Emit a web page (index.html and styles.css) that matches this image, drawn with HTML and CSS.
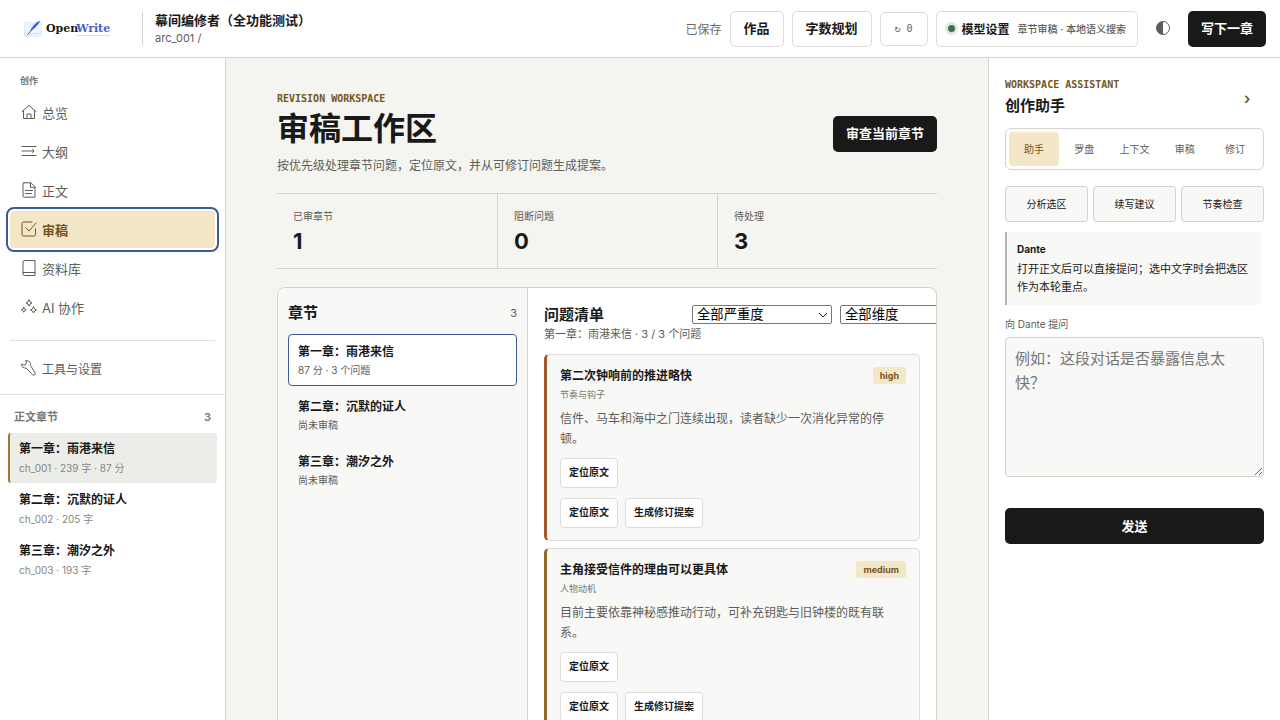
FILE: index.html
```html
<!DOCTYPE html>
<html lang="zh-CN">
<head>
    <meta charset="UTF-8">
    <meta name="viewport" content="width=device-width, initial-scale=1.0">
    <title>OpenWrite - 审稿</title>
    <link rel="stylesheet" href="styles.css">
</head>
<body>
    <header class="topbar">
        <a class="logo" href="#" aria-label="OpenWrite">
            <svg class="logo-mark" viewBox="0 0 20 20" aria-hidden="true">
                <path d="M2 4 Q6 2.500 10 3.500 T18.500 3 V16.500 Q14 18 10 17 T1.500 17.500 Z" fill="#edf5fd" stroke="#cfe1f5" stroke-width=".7"/>
                <path d="M5 16.500 Q10 13.500 16 14.500" fill="none" stroke="#c3d7f2" stroke-width=".8"/>
                <path d="M17.200 1.500 C12.500 3.500 9 7 7 11.800 C11 10.500 15.500 6.500 17.200 1.500 Z" fill="#5b7be6"/>
                <path d="M16 3 L4.600 15.500" stroke="#2a3e9c" stroke-width=".9" fill="none"/>
            </svg>
            <span class="logo-text">Open<span class="logo-accent">Write</span></span>
        </a>
        <div class="project">
            <strong class="project-name">幕间编修者（全功能测试）</strong>
            <span class="project-path">arc_001 /</span>
        </div>
        <div class="actions">
            <span class="save-state">已保存</span>
            <button class="btn" type="button">作品</button>
            <button class="btn" type="button">字数规划</button>
            <button class="btn btn-count" type="button">↻ 0</button>
            <button class="btn btn-model" type="button">
                <span class="dot"></span>模型设置<small>章节审稿 · 本地语义搜索</small>
            </button>
            <button class="theme" type="button" aria-label="切换主题">
                <svg viewBox="0 0 16 16" aria-hidden="true">
                    <circle cx="8" cy="8" r="6.500" fill="none" stroke="currentColor"/>
                    <path d="M8 1.500 A6.500 6.500 0 0 0 8 14.500 Z" fill="currentColor"/>
                </svg>
            </button>
            <button class="btn btn-dark" type="button">写下一章</button>
        </div>
    </header>

    <div class="shell">
        <aside class="sidebar">
            <nav class="nav">
                <p class="nav-label">创作</p>
                <a class="nav-item" href="#">
                    <svg viewBox="0 0 16 16"><path d="M1 7.500 8 1.500l7 6M2.500 6.500v8h11v-8M6 14.500v-4.500h4v4.500"/></svg>总览
                </a>
                <a class="nav-item" href="#">
                    <svg viewBox="0 0 16 16"><path d="M1 3.500h14M1 8h11M1 12.500h14M11.500 6.500 13 8l-1.500 1.500"/></svg>大纲
                </a>
                <a class="nav-item" href="#">
                    <svg viewBox="0 0 16 16"><path d="M3 .8h7l4 4v10.400H3a1 1 0 0 1-1-1V1.800a1 1 0 0 1 1-1zM9.500.8v4.500H14M4.500 8.500h7M4.500 11.500h6"/></svg>正文
                </a>
                <a class="nav-item active" href="#" aria-current="page">
                    <svg viewBox="0 0 16 16"><path d="M14.500 7.500v6a1.500 1.500 0 0 1-1.500 1.500H2.500A1.500 1.500 0 0 1 1 13.500v-11A1.500 1.500 0 0 1 2.500 1H11M5 7l3 3 7-8"/></svg>审稿
                </a>
                <a class="nav-item" href="#">
                    <svg viewBox="0 0 16 16"><path d="M3.500.5H14v15H3.500A1.500 1.500 0 0 1 2 14V2A1.500 1.500 0 0 1 3.500.5zM2 12.500h12"/></svg>资料库
                </a>
                <a class="nav-item" href="#">
                    <svg viewBox="0 0 16 16"><path d="M8 1q.5 2.500 3 3-2.500.5-3 3-.5-2.500-3-3 2.500-.5 3-3zM2.800 8.500q.4 2 2.400 2.400-2 .4-2.400 2.400-.4-2-2.400-2.400 2-.4 2.400-2.400zM12.500 8q.5 2.500 3 3-2.500.5-3 3-.5-2.500-3-3 2.500-.5 3-3z"/></svg>AI 协作
                </a>
                <hr class="nav-line">
                <a class="nav-item nav-small" href="#">
                    <svg viewBox="0 0 16 16"><path d="M5 .8C5.800 2 5.500 4.500 4 5 2.500 5.300 1.500 4 .5 4.200.5 6.500 2.500 8.600 5 8l6.500 6.700c1.500 1.200 3.300-.2 2.700-1.700L9.500 5.500C10 2.500 8 .3 5 .8z"/></svg>工具与设置
                </a>
            </nav>
            <section class="book">
                <div class="book-head"><span>正文章节</span><span>3</span></div>
                <a class="book-item current" href="#"><strong>第一章：雨港来信</strong><span>ch_001 · 239 字 · 87 分</span></a>
                <a class="book-item" href="#"><strong>第二章：沉默的证人</strong><span>ch_002 · 205 字</span></a>
                <a class="book-item" href="#"><strong>第三章：潮汐之外</strong><span>ch_003 · 193 字</span></a>
            </section>
        </aside>

        <main class="main">
            <div class="page-head">
                <div>
                    <p class="kicker">REVISION WORKSPACE</p>
                    <h1>审稿工作区</h1>
                    <p class="lead">按优先级处理章节问题，定位原文，并从可修订问题生成提案。</p>
                </div>
                <button class="btn btn-dark" type="button">审查当前章节</button>
            </div>

            <div class="stats">
                <div class="stat"><span>已审章节</span><strong>1</strong></div>
                <div class="stat"><span>阻断问题</span><strong>0</strong></div>
                <div class="stat"><span>待处理</span><strong>3</strong></div>
            </div>

            <div class="review">
                <section class="chapters">
                    <div class="chapters-head"><h2>章节</h2><span>3</span></div>
                    <button class="chapter selected" type="button"><strong>第一章：雨港来信</strong><span>87 分 · 3 个问题</span></button>
                    <button class="chapter" type="button"><strong>第二章：沉默的证人</strong><span>尚未审稿</span></button>
                    <button class="chapter" type="button"><strong>第三章：潮汐之外</strong><span>尚未审稿</span></button>
                </section>
                <section class="issues">
                    <div class="issues-head">
                        <div class="issues-title">
                            <h2>问题清单</h2>
                            <p>第一章：雨港来信 · 3 / 3 个问题</p>
                        </div>
                        <div class="filters">
                            <select aria-label="严重度"><option>全部严重度</option></select>
                            <select aria-label="维度"><option>全部维度</option></select>
                        </div>
                    </div>
                    <article class="issue high">
                        <div class="issue-head"><h3>第二次钟响前的推进略快</h3><span class="tag">high</span></div>
                        <p class="issue-type">节奏与钩子</p>
                        <p class="issue-text">信件、马车和海中之门连续出现，读者缺少一次消化异常的停顿。</p>
                        <div class="issue-row"><button class="btn-mini" type="button">定位原文</button></div>
                        <div class="issue-row">
                            <button class="btn-mini" type="button">定位原文</button>
                            <button class="btn-mini" type="button">生成修订提案</button>
                        </div>
                    </article>
                    <article class="issue medium">
                        <div class="issue-head"><h3>主角接受信件的理由可以更具体</h3><span class="tag">medium</span></div>
                        <p class="issue-type">人物动机</p>
                        <p class="issue-text">目前主要依靠神秘感推动行动，可补充钥匙与旧钟楼的既有联系。</p>
                        <div class="issue-row"><button class="btn-mini" type="button">定位原文</button></div>
                        <div class="issue-row">
                            <button class="btn-mini" type="button">定位原文</button>
                            <button class="btn-mini" type="button">生成修订提案</button>
                        </div>
                    </article>
                </section>
            </div>
        </main>

        <aside class="assistant">
            <div class="assistant-head">
                <div>
                    <p class="kicker">WORKSPACE ASSISTANT</p>
                    <h2>创作助手</h2>
                </div>
                <button class="collapse" type="button" aria-label="收起">›</button>
            </div>
            <div class="tabs">
                <button class="tab on" type="button">助手</button>
                <button class="tab" type="button">罗盘</button>
                <button class="tab" type="button">上下文</button>
                <button class="tab" type="button">审稿</button>
                <button class="tab" type="button">修订</button>
            </div>
            <div class="quick">
                <button type="button">分析选区</button>
                <button type="button">续写建议</button>
                <button type="button">节奏检查</button>
            </div>
            <div class="message">
                <strong>Dante</strong>
                <p>打开正文后可以直接提问；选中文字时会把选区作为本轮重点。</p>
            </div>
            <form class="ask">
                <label for="question">向 Dante 提问</label>
                <textarea id="question" placeholder="例如：这段对话是否暴露信息太快？"></textarea>
                <button class="btn btn-dark" type="button">发送</button>
            </form>
        </aside>
    </div>
</body>
</html>
```
FILE: styles.css
```css
* {
    box-sizing: border-box;
}

body {
    margin: 0;
    height: 100vh;
    display: flex;
    flex-direction: column;
    overflow: hidden;
    font-family: Inter, "Noto Sans CJK SC", sans-serif;
    font-size: 13px;
    color: #191919;
    background: #f4f4f0;
}

h1, h2, h3, p {
    margin: 0;
}

h2 {
    font-size: 15px;
    line-height: 22px;
}

a {
    color: inherit;
    text-decoration: none;
}

button, textarea {
    font-family: inherit;
    color: inherit;
}

button {
    cursor: pointer;
}

/* 顶栏 */
.topbar {
    display: flex;
    align-items: center;
    flex-shrink: 0;
    height: 58px;
    padding: 0 14px 0 23px;
    background: #fff;
    border-bottom: 1px solid #d3d4ce;
}

.logo {
    display: flex;
    align-items: center;
    gap: 3px;
    width: 119px;
}

.logo-mark {
    width: 20px;
    height: 20px;
}

.logo-text {
    font-family: "DejaVu Serif", serif;
    font-size: 11px;
    font-weight: bold;
}

.logo-accent {
    margin-left: -2px;
    color: #4262cc;
    border-bottom: 1px solid #d5def5;
}

.project {
    display: flex;
    flex-direction: column;
    gap: 3px;
    padding-left: 12px;
    border-left: 1px solid #d3d4ce;
}

.project-name {
    font-size: 13px;
    line-height: 16px;
    white-space: nowrap;
}

.project-path {
    font-size: 11px;
    line-height: 14px;
    color: #5c5d58;
}

.actions {
    display: flex;
    align-items: center;
    gap: 8px;
    margin-left: auto;
    white-space: nowrap;
}

.save-state {
    font-size: 12px;
    color: #6b6c66;
}

.btn {
    height: 36px;
    padding: 0 13px 2px;
    font-size: 13px;
    font-weight: 600;
    background: #fff;
    border: 1px solid #dcddd8;
    border-radius: 5px;
}

.btn-dark {
    color: #fff;
    background: #191919;
    border: 0;
}

.btn-count {
    width: 48px;
    height: 34px;
    padding: 0;
    font-family: "DejaVu Sans Mono", monospace;
    font-size: 10px;
    font-weight: normal;
    color: #5c5d58;
}

.btn-model {
    display: flex;
    align-items: center;
    padding: 0 11px 1px;
    font-size: 12px;
}

.btn-model small {
    margin-left: 8px;
    font-size: 10px;
    font-weight: 500;
    color: #5c5d58;
}

.dot {
    width: 7px;
    height: 7px;
    margin-right: 7px;
    border-radius: 50%;
    background: #397252;
    box-shadow: 0 0 0 3px #dcebe1;
}

.theme {
    width: 34px;
    height: 34px;
    padding: 8px 9px 10px;
    color: #5c5d58;
    background: none;
    border: 0;
}

.theme svg {
    display: block;
    width: 16px;
    height: 16px;
}

/* 三栏布局 */
.shell {
    flex: 1;
    min-height: 0;
    display: grid;
    grid-template-columns: 226px minmax(0, 1fr) 292px;
}

.sidebar {
    background: #fff;
    border-right: 1px solid #d3d4ce;
    overflow: hidden;
}

.nav {
    display: flex;
    flex-direction: column;
    gap: 2px;
    padding: 15px 10px 7px;
    border-bottom: 1px solid #e2e3de;
}

.nav-label {
    padding: 0 10px;
    font-size: 9px;
    font-weight: 600;
    line-height: 16px;
    margin-bottom: 3px;
    color: #767771;
}

.nav-item {
    display: flex;
    align-items: center;
    gap: 5px;
    height: 37px;
    padding: 0 11px 1px;
    border-radius: 4px;
    color: #5c5d58;
}

.nav-item svg {
    width: 16px;
    height: 16px;
    fill: none;
    stroke: currentColor;
    stroke-linejoin: round;
    stroke-linecap: round;
}

.nav-item.active {
    font-weight: 600;
    color: #76541a;
    background: #f3e7c8;
    outline: 2px solid #3d5a94;
    outline-offset: 2px;
}

.nav-small {
    font-size: 12px;
}

.nav-line {
    width: 100%;
    margin: 12px 0 7px;
    border: 0;
    border-top: 1px solid #e2e3de;
}

.book {
    padding: 12px 8px;
}

.book-head {
    display: flex;
    justify-content: space-between;
    padding: 0 6px;
    margin-bottom: 6px;
    font-size: 11px;
    font-weight: 600;
    line-height: 20px;
    color: #767771;
}

.book-item {
    display: flex;
    flex-direction: column;
    gap: 2px;
    padding: 7px 9px;
    border-left: 2px solid transparent;
    border-radius: 3px;
    font-size: 12px;
    line-height: 18px;
    margin-bottom: 1px;
}

.book-item span {
    font-size: 10px;
    line-height: 16px;
    color: #858680;
}

.book-item.current {
    background: #ecede8;
    border-left-color: #a6762f;
}

/* 主区域 */
.main {
    padding: 33px 51px 0;
    overflow: hidden;
}

.kicker {
    font-family: "DejaVu Sans Mono", monospace;
    font-size: 10px;
    font-weight: bold;
    line-height: 16px;
    color: #76541a;
}

.page-head {
    display: flex;
    align-items: center;
    justify-content: space-between;
    padding-bottom: 17px;
}

h1 {
    font-size: 32px;
    line-height: 43px;
}

.lead {
    font-size: 12px;
    line-height: 20px;
    margin-top: 6px;
    color: #5c5d58;
}

.page-head .btn {
    flex-shrink: 0;
}

.stats {
    display: grid;
    grid-template-columns: repeat(3, 1fr);
    border-top: 1px solid #d3d4ce;
    border-bottom: 1px solid #d3d4ce;
}

.stat {
    display: flex;
    flex-direction: column;
    padding: 14px 16px 11px;
}

.stat + .stat {
    border-left: 1px solid #d3d4ce;
}

.stat span {
    font-size: 10px;
    line-height: 17px;
    color: #5c5d58;
}

.stat strong {
    font-size: 22px;
    line-height: 32px;
}

.review {
    display: grid;
    grid-template-columns: 250px minmax(0, 1fr);
    margin-top: 18px;
    border: 1px solid #d3d4ce;
    border-radius: 8px;
    background: #fff;
    overflow: hidden;
}

.chapters {
    padding: 14px 10px;
    background: #f8f8f6;
    border-right: 1px solid #d3d4ce;
}

.chapters-head {
    display: flex;
    align-items: center;
    justify-content: space-between;
    margin-bottom: 10px;
    font-size: 11px;
    color: #5c5d58;
}

.chapters-head h2 {
    color: #191919;
}

.chapter {
    display: flex;
    flex-direction: column;
    width: 100%;
    gap: 1px;
    padding: 8px 9px 7px;
    margin-bottom: 3px;
    font-size: 12px;
    line-height: 18px;
    text-align: left;
    background: none;
    border: 1px solid transparent;
    border-radius: 4px;
}

.chapter span {
    font-size: 10px;
    line-height: 16px;
    color: #5c5d58;
}

.chapter.selected {
    background: #fff;
    border-color: #3d5a94;
}

.issues {
    padding: 16px;
    min-width: 0;
}

.issues-head {
    display: flex;
    gap: 8px;
    margin-bottom: 11px;
}

.issues-title {
    width: 140px;
    flex-shrink: 0;
    white-space: nowrap;
}

.issues-title p {
    font-size: 11px;
    line-height: 17px;
    color: #5c5d58;
}

.filters {
    display: flex;
    align-items: flex-start;
    gap: 8px;
    padding-top: 1px;
}

.filters select {
    appearance: none;
    width: 140px;
    height: 19px;
    flex-shrink: 0;
    padding: 0 4px;
    font-family: inherit;
    line-height: 17px;
    color: #000;
    background: #fff url("data:image/svg+xml,%3Csvg xmlns='http://www.w3.org/2000/svg' viewBox='0 0 10 6'%3E%3Cpath d='M1 1l4 4 4-4' fill='none' stroke='%23222'/%3E%3C/svg%3E") no-repeat right 3px center / 10px 6px;
    border: 1px solid #767676;
    border-radius: 2px;
}

.issue {
    padding: 12px 13px;
    margin-bottom: 7px;
    background: #f8f8f6;
    border: 1px solid #dcddd8;
    border-left-width: 3px;
    border-radius: 5px;
}

.issue.high {
    border-left-color: #a0592a;
}

.issue.medium {
    border-left-color: #8f682b;
}

.issue-head {
    display: flex;
    justify-content: space-between;
    align-items: center;
}

.issue-head h3 {
    font-size: 12px;
    line-height: 17px;
}

.tag {
    padding: 0 7px;
    font-size: 9px;
    font-weight: 700;
    line-height: 17px;
    color: #76541a;
    background: #f3e7c8;
    border-radius: 3px;
}

.issue-type {
    margin-top: 3px;
    font-size: 9px;
    line-height: 15px;
    color: #767771;
}

.issue-text {
    margin: 7px 0 9px;
    font-size: 12px;
    line-height: 20px;
    color: #5c5d58;
}

.issue-row {
    display: flex;
    gap: 7px;
}

.issue-row + .issue-row {
    margin-top: 10px;
}

.btn-mini {
    height: 30px;
    padding: 0 8px 3px;
    font-size: 10px;
    font-weight: 600;
    background: #fff;
    border: 1px solid #dcddd8;
    border-radius: 4px;
}

/* 右侧助手 */
.assistant {
    padding: 19px 16px;
    background: #fff;
    border-left: 1px solid #d3d4ce;
    overflow: hidden;
}

.assistant-head {
    display: flex;
    align-items: center;
    justify-content: space-between;
    padding-bottom: 9px;
}

.assistant-head h2 {
    line-height: 26px;
}

.collapse {
    width: 34px;
    height: 34px;
    padding: 0;
    font-size: 16px;
    font-weight: 600;
    color: #5c5d58;
    background: none;
    border: 0;
}

.tabs {
    display: grid;
    grid-template-columns: repeat(5, 1fr);
    padding: 3px;
    border: 1px solid #d3d4ce;
    border-radius: 6px;
}

.tab {
    height: 34px;
    padding: 0 0 2px;
    font-size: 10px;
    color: #5c5d58;
    background: none;
    border: 0;
    border-radius: 4px;
}

.tab.on {
    color: #76541a;
    background: #f3e7c8;
}

.quick {
    display: grid;
    grid-template-columns: repeat(3, 1fr);
    gap: 5px;
    margin: 16px 0 10px;
}

.quick button {
    height: 36px;
    padding: 0 0 2px;
    font-size: 10px;
    background: #f8f8f6;
    border: 1px solid #d3d4ce;
    border-radius: 4px;
}

.message {
    margin-right: 3px;
    padding: 9px 10px;
    font-size: 11px;
    line-height: 18px;
    background: #f8f8f6;
    border-left: 2px solid #b4b5af;
}

.message strong {
    display: block;
    font-size: 10px;
    line-height: 16px;
    margin-bottom: 3px;
}

.ask {
    display: flex;
    flex-direction: column;
    margin-top: 11px;
}

.ask label {
    font-size: 10px;
    line-height: 16px;
    margin-bottom: 5px;
    color: #5c5d58;
}

.ask textarea {
    height: 140px;
    padding: 9px;
    font-size: 15px;
    line-height: 24px;
    background: #f8f8f6;
    border: 1px solid #d3d4ce;
    border-radius: 4px;
    resize: vertical;
}

.ask .btn {
    margin-top: 31px;
}
```
